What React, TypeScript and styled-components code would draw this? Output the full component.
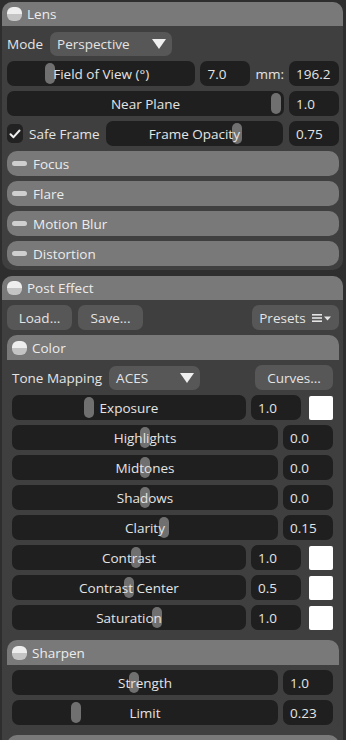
import React from "react";
import styled, { createGlobalStyle } from "styled-components";

const GlobalStyle = createGlobalStyle`
  html, body {
    margin: 0;
    padding: 0;
    background: #2e2e2e;
  }
  body {
    font-family: "Open Sans", "Noto Sans", sans-serif;
    font-size: 13.5px;
    color: #e4e4e4;
  }
`;

const Page = styled.div`
  width: 346px;
  height: 740px;
  overflow: hidden;
  box-sizing: border-box;
  padding: 2px 3px 0 2px;
  display: flex;
  flex-direction: column;
  gap: 6px;
`;

const Panel = styled.section`
  background: #3f3f3f;
  border-radius: 10px;
  flex-shrink: 0;
`;

const PanelHeader = styled.div`
  height: 24px;
  background: #797979;
  border-radius: 10px 10px 0 0;
  display: flex;
  align-items: center;
  gap: 5px;
  padding-left: 5px;
  color: #ececec;
`;

const PanelBody = styled.div`
  padding: 5px 4px 4px 5px;
  display: flex;
  flex-direction: column;
  gap: 5px;
`;

const OpenIcon = styled.span`
  width: 15px;
  height: 14px;
  border-radius: 6px;
  background: linear-gradient(#eeeeee 0%, #eeeeee 50%, #c4c4c4 50%, #c4c4c4 100%);
  flex-shrink: 0;
`;

const ClosedIcon = styled.span`
  width: 15px;
  height: 5px;
  border-radius: 3px;
  background: #cfcfcf;
  flex-shrink: 0;
`;

const Collapsed = styled.div`
  height: 25px;
  background: #797979;
  border-radius: 10px;
  display: flex;
  align-items: center;
  gap: 6px;
  padding-left: 5px;
  color: #ececec;
`;

const SubPanel = styled.div`
  background: #3f3f3f;
  border-radius: 10px;
`;

const SubHeader = styled(PanelHeader)`
  height: 25px;
`;

const SubBody = styled.div`
  padding: 5px 6px 5px 5px;
  display: flex;
  flex-direction: column;
  gap: 5px;
`;

const Row = styled.div<{ $gap?: number }>`
  height: 25px;
  display: flex;
  align-items: center;
  gap: ${(p) => p.$gap ?? 5}px;
`;

const Label = styled.span`
  white-space: nowrap;
`;

const Field = styled.div`
  height: 25px;
  background: #1f1f1f;
  border-radius: 7px;
  box-sizing: border-box;
`;

const SliderTrack = styled(Field)`
  flex: 1;
  position: relative;
  display: flex;
  align-items: center;
  justify-content: center;
  min-width: 0;
`;

const Thumb = styled.span`
  position: absolute;
  top: 2px;
  width: 10px;
  height: 21px;
  margin-left: -5px;
  border-radius: 5px;
  background: #707070;
`;

const SliderText = styled.span`
  position: relative;
  white-space: nowrap;
`;

const NumberBox = styled(Field)<{ $w?: number }>`
  width: ${(p) => p.$w ?? 50}px;
  flex-shrink: 0;
  display: flex;
  align-items: center;
  padding-left: 7px;
`;

const Swatch = styled.span`
  width: 24px;
  height: 24px;
  border-radius: 2px;
  background: #ffffff;
  flex-shrink: 0;
  margin-left: 3px;
`;

const Select = styled.div<{ $w: number }>`
  width: ${(p) => p.$w}px;
  height: 24px;
  box-sizing: border-box;
  background: #575757;
  border-radius: 7px;
  display: flex;
  align-items: center;
  justify-content: space-between;
  padding: 0 6px 0 7px;
  flex-shrink: 0;
`;

const Caret = styled.span`
  width: 0;
  height: 0;
  border-left: 7px solid transparent;
  border-right: 7px solid transparent;
  border-top: 10px solid #efefef;
`;

const Button = styled.div<{ $w: number }>`
  width: ${(p) => p.$w}px;
  height: 25px;
  box-sizing: border-box;
  background: #575757;
  border-radius: 7px;
  display: flex;
  align-items: center;
  justify-content: center;
  gap: 6px;
  flex-shrink: 0;
`;

const Spacer = styled.span`
  flex: 1;
`;

const CheckBox = styled.span`
  width: 16px;
  height: 19px;
  border-radius: 5px;
  background: #222222;
  display: flex;
  align-items: center;
  justify-content: center;
  flex-shrink: 0;
`;

function Slider({ label, pos }: { label: string; pos: number }) {
  return (
    <SliderTrack>
      <Thumb style={{ left: `${pos}%` }} />
      <SliderText>{label}</SliderText>
    </SliderTrack>
  );
}

function ColorRow({
  label,
  pos,
  value,
  swatch,
}: {
  label: string;
  pos: number;
  value: string;
  swatch?: boolean;
}) {
  return (
    <Row>
      <Slider label={label} pos={pos} />
      <NumberBox>{value}</NumberBox>
      {swatch && <Swatch />}
    </Row>
  );
}

function Check() {
  return (
    <svg width="12" height="10" viewBox="0 0 12 10">
      <path d="M1.5 5.2 L4.5 8.2 L10.5 1.5" stroke="#f0f0f0" strokeWidth="2" fill="none" strokeLinecap="round" strokeLinejoin="round" />
    </svg>
  );
}

function MenuIcon() {
  return (
    <svg width="20" height="10" viewBox="0 0 20 10">
      <rect x="0" y="1" width="10" height="1.6" fill="#e4e4e4" />
      <rect x="0" y="4.2" width="10" height="1.6" fill="#e4e4e4" />
      <rect x="0" y="7.4" width="10" height="1.6" fill="#e4e4e4" />
      <path d="M12 3.5 L19 3.5 L15.5 7.5 Z" fill="#e4e4e4" />
    </svg>
  );
}

export default function App() {
  return (
    <>
      <GlobalStyle />
      <Page>
        <Panel>
          <PanelHeader>
            <OpenIcon />
            Lens
          </PanelHeader>
          <PanelBody>
            <Row $gap={7}>
              <Label>Mode</Label>
              <Select $w={122}>
                Perspective
                <Caret />
              </Select>
            </Row>
            <Row>
              <Slider label="Field of View (°)" pos={23} />
              <NumberBox>7.0</NumberBox>
              <Label>mm:</Label>
              <NumberBox>196.2</NumberBox>
            </Row>
            <Row>
              <Slider label="Near Plane" pos={97} />
              <NumberBox>1.0</NumberBox>
            </Row>
            <Row $gap={6}>
              <CheckBox>
                <Check />
              </CheckBox>
              <Label>Safe Frame</Label>
              <Slider label="Frame Opacity" pos={74} />
              <NumberBox>0.75</NumberBox>
            </Row>
            <Collapsed>
              <ClosedIcon />
              Focus
            </Collapsed>
            <Collapsed>
              <ClosedIcon />
              Flare
            </Collapsed>
            <Collapsed>
              <ClosedIcon />
              Motion Blur
            </Collapsed>
            <Collapsed>
              <ClosedIcon />
              Distortion
            </Collapsed>
          </PanelBody>
        </Panel>
        <Panel>
          <PanelHeader>
            <OpenIcon />
            Post Effect
          </PanelHeader>
          <PanelBody>
            <Row $gap={6}>
              <Button $w={65}>Load...</Button>
              <Button $w={65}>Save...</Button>
              <Spacer />
              <Button $w={87}>
                Presets
                <MenuIcon />
              </Button>
            </Row>
            <SubPanel>
              <SubHeader>
                <OpenIcon />
                Color
              </SubHeader>
              <SubBody>
                <Row $gap={7}>
                  <Label>Tone Mapping</Label>
                  <Select $w={91}>
                    ACES
                    <Caret />
                  </Select>
                  <Spacer />
                  <Button $w={78}>Curves...</Button>
                </Row>
                <ColorRow label="Exposure" pos={33} value="1.0" swatch />
                <ColorRow label="Highlights" pos={50} value="0.0" />
                <ColorRow label="Midtones" pos={50} value="0.0" />
                <ColorRow label="Shadows" pos={50} value="0.0" />
                <ColorRow label="Clarity" pos={57} value="0.15" />
                <ColorRow label="Contrast" pos={53} value="1.0" swatch />
                <ColorRow label="Contrast Center" pos={50} value="0.5" swatch />
                <ColorRow label="Saturation" pos={62} value="1.0" swatch />
              </SubBody>
            </SubPanel>
            <SubPanel>
              <SubHeader>
                <OpenIcon />
                Sharpen
              </SubHeader>
              <SubBody>
                <ColorRow label="Strength" pos={46} value="1.0" />
                <ColorRow label="Limit" pos={24} value="0.23" />
              </SubBody>
            </SubPanel>
            <Collapsed />
          </PanelBody>
        </Panel>
      </Page>
    </>
  );
}
